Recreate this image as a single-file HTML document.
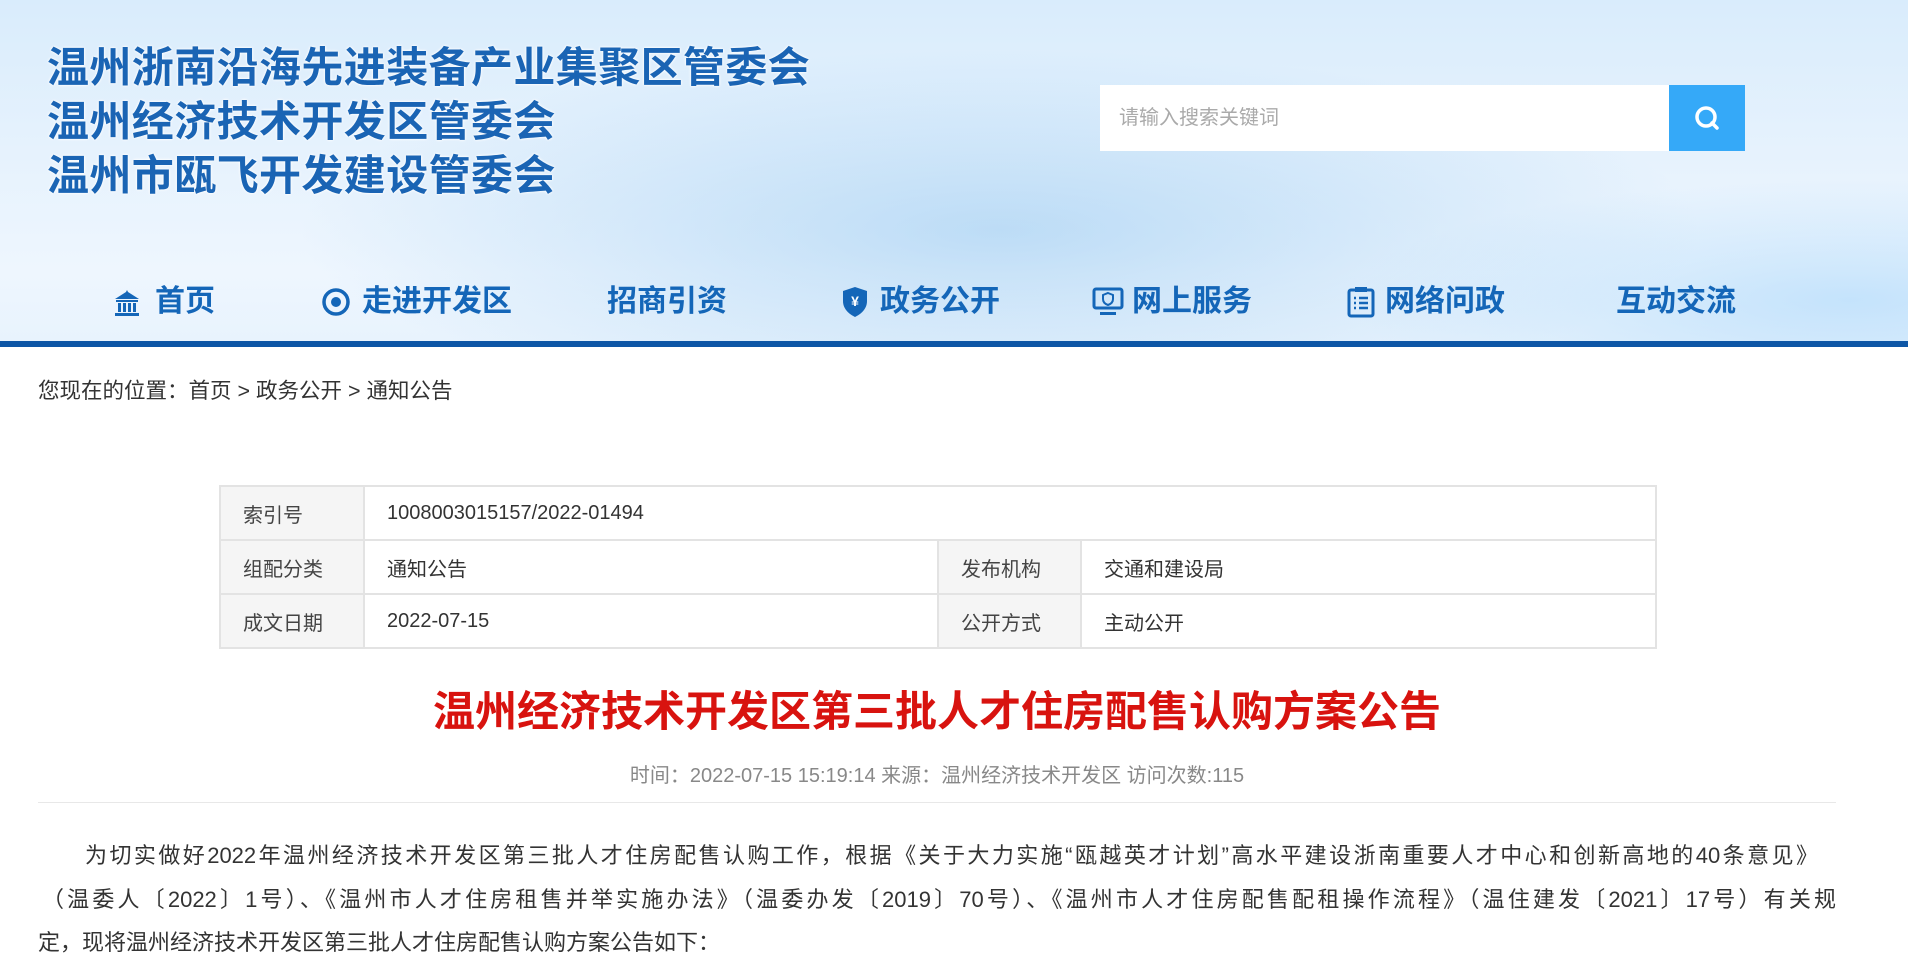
<!DOCTYPE html>
<html><head><meta charset="utf-8"><style>
*{margin:0;padding:0;box-sizing:border-box}
body{width:1908px;height:968px;overflow:hidden;background:#fff;font-family:"Liberation Sans","Noto Sans CJK SC",sans-serif;position:relative}
.hd{position:absolute;left:0;top:0;width:1908px;height:341px;background:radial-gradient(ellipse 700px 180px at 1000px 230px,rgba(150,200,240,.55),transparent),radial-gradient(ellipse 500px 120px at 1850px 300px,rgba(170,215,250,.6),transparent),linear-gradient(180deg,#d9ecfc 0%,#e6f2fd 45%,#eef6fe 80%,#e8f3fd 100%)}
.bar{position:absolute;left:0;top:341px;width:1908px;height:6px;background:#0d56a6}
.t{position:absolute;left:47px;font-size:42px;font-weight:bold;color:#1a64b4;text-shadow:0 0 2px #fff,0 0 3px #fff;line-height:50px;letter-spacing:0.4px}
.sb{position:absolute;left:1100px;top:85px;width:569px;height:66px;background:#fff;font-size:20px;color:#aaa;padding-left:19px;line-height:66px}
.btn{position:absolute;left:1669px;top:85px;width:76px;height:66px;background:#35a9f8}
.nav{position:absolute;top:282px;font-size:30px;font-weight:bold;color:#1466b8;line-height:40px;white-space:nowrap}
.nav svg{position:absolute;top:7px}
.bc{position:absolute;left:38px;top:374px;font-size:21.5px;color:#333}
table{position:absolute;left:219px;top:485px;width:1438px;border-collapse:collapse;font-size:20px;color:#333}
td{border:2px solid #e3e3e3;height:54px;padding-left:22px}
td.l{background:#f5f5f5;color:#444}
h1{position:absolute;left:0;width:1874px;top:684px;text-align:center;font-size:42px;color:#d8130f;font-weight:bold;line-height:56px}
.meta{position:absolute;left:0;width:1874px;top:759px;text-align:center;font-size:20px;color:#888}
.hr{position:absolute;left:38px;top:802px;width:1798px;height:1px;background:#e8e8e8}
.p{position:absolute;left:38px;width:1798px;font-size:22px;line-height:44px;color:#333;white-space:nowrap;text-align:justify;text-align-last:justify}
</style></head><body>
<div class="hd"></div>
<div class="t" style="top:43px">温州浙南沿海先进装备产业集聚区管委会</div>
<div class="t" style="top:97px">温州经济技术开发区管委会</div>
<div class="t" style="top:151px">温州市瓯飞开发建设管委会</div>
<div class="sb">请输入搜索关键词</div>
<div class="btn"><svg width="76" height="66" viewBox="0 0 76 66"><circle cx="37" cy="32" r="9" fill="none" stroke="#fff" stroke-width="3.5"/><path d="M43 38l5 5" stroke="#fff" stroke-width="3.5" stroke-linecap="round"/></svg></div>

<div class="nav" style="left:113px"><svg width="28" height="28" viewBox="0 0 28 28" style="left:0"><path d="M14 1l1 2 11 7H2l11-7z M3 11h22v2H3z M5 14h3v9H5z M10 14h3v9h-3z M15 14h3v9h-3z M20 14h3v9h-3z M2 24h24v3H2z" fill="#1466b8"/></svg><span style="margin-left:42px">首页</span></div>
<div class="nav" style="left:320px"><svg width="32" height="32" viewBox="0 0 32 32" style="left:0;top:4px"><circle cx="16" cy="16" r="12" fill="none" stroke="#1466b8" stroke-width="3.5"/><circle cx="16" cy="16" r="5" fill="#1466b8"/></svg><span style="margin-left:42px">走进开发区</span></div>
<div class="nav" style="left:607px">招商引资</div>
<div class="nav" style="left:838px"><svg width="34" height="34" viewBox="0 0 34 34" style="left:0;top:3px"><path d="M17 2l12 4v10c0 8-6 13-12 16C11 29 5 24 5 16V6z" fill="#1466b8"/><text x="17" y="21" font-size="14" fill="#fff" text-anchor="middle" font-family="Liberation Sans">¥</text></svg><span style="margin-left:42px">政务公开</span></div>
<div class="nav" style="left:1092px"><svg width="32" height="32" viewBox="0 0 32 32" style="left:0;top:4px"><rect x="2" y="3" width="28" height="19" rx="2" fill="none" stroke="#1466b8" stroke-width="3"/><path d="M16 7l5 2v4c0 3-2 5-5 6-3-1-5-3-5-6V9z" fill="none" stroke="#1466b8" stroke-width="2"/><rect x="8" y="26" width="16" height="3" fill="#1466b8"/></svg><span style="margin-left:40px">网上服务</span></div>
<div class="nav" style="left:1346px"><svg width="30" height="32" viewBox="0 0 30 32" style="left:0;top:4px"><rect x="3" y="4" width="24" height="26" rx="2" fill="none" stroke="#1466b8" stroke-width="3"/><rect x="9" y="1" width="12" height="5" fill="#1466b8"/><path d="M8 12h2M13 12h9M8 17h2M13 17h9M8 22h2M13 22h9" stroke="#1466b8" stroke-width="2.5"/></svg><span style="margin-left:39px">网络问政</span></div>
<div class="nav" style="left:1616px">互动交流</div>
<div class="bar"></div>

<div class="bc">您现在的位置：首页 &gt; 政务公开 &gt; 通知公告</div>
<table>
<tr><td class="l" style="width:144px">索引号</td><td colspan="3">1008003015157/2022-01494</td></tr>
<tr><td class="l">组配分类</td><td style="width:574px">通知公告</td><td class="l" style="width:143px">发布机构</td><td>交通和建设局</td></tr>
<tr><td class="l">成文日期</td><td>2022-07-15</td><td class="l">公开方式</td><td>主动公开</td></tr>
</table>
<h1>温州经济技术开发区第三批人才住房配售认购方案公告</h1>
<div class="meta">时间：2022-07-15 15:19:14 来源：温州经济技术开发区 访问次数:115</div>
<div class="hr"></div>
<div class="p" style="top:834px;left:85px;width:1733px">为切实做好2022年温州经济技术开发区第三批人才住房配售认购工作，根据《关于大力实施“瓯越英才计划”高水平建设浙南重要人才中心和创新高地的40条意见》</div>
<div class="p" style="top:878px;left:42px;width:1794px">（温委人〔2022〕1号）、《温州市人才住房租售并举实施办法》（温委办发〔2019〕70号）、《温州市人才住房配售配租操作流程》（温住建发〔2021〕17号）有关规</div>
<div class="p" style="top:921px;text-align-last:left">定，现将温州经济技术开发区第三批人才住房配售认购方案公告如下：</div>
</body></html>
